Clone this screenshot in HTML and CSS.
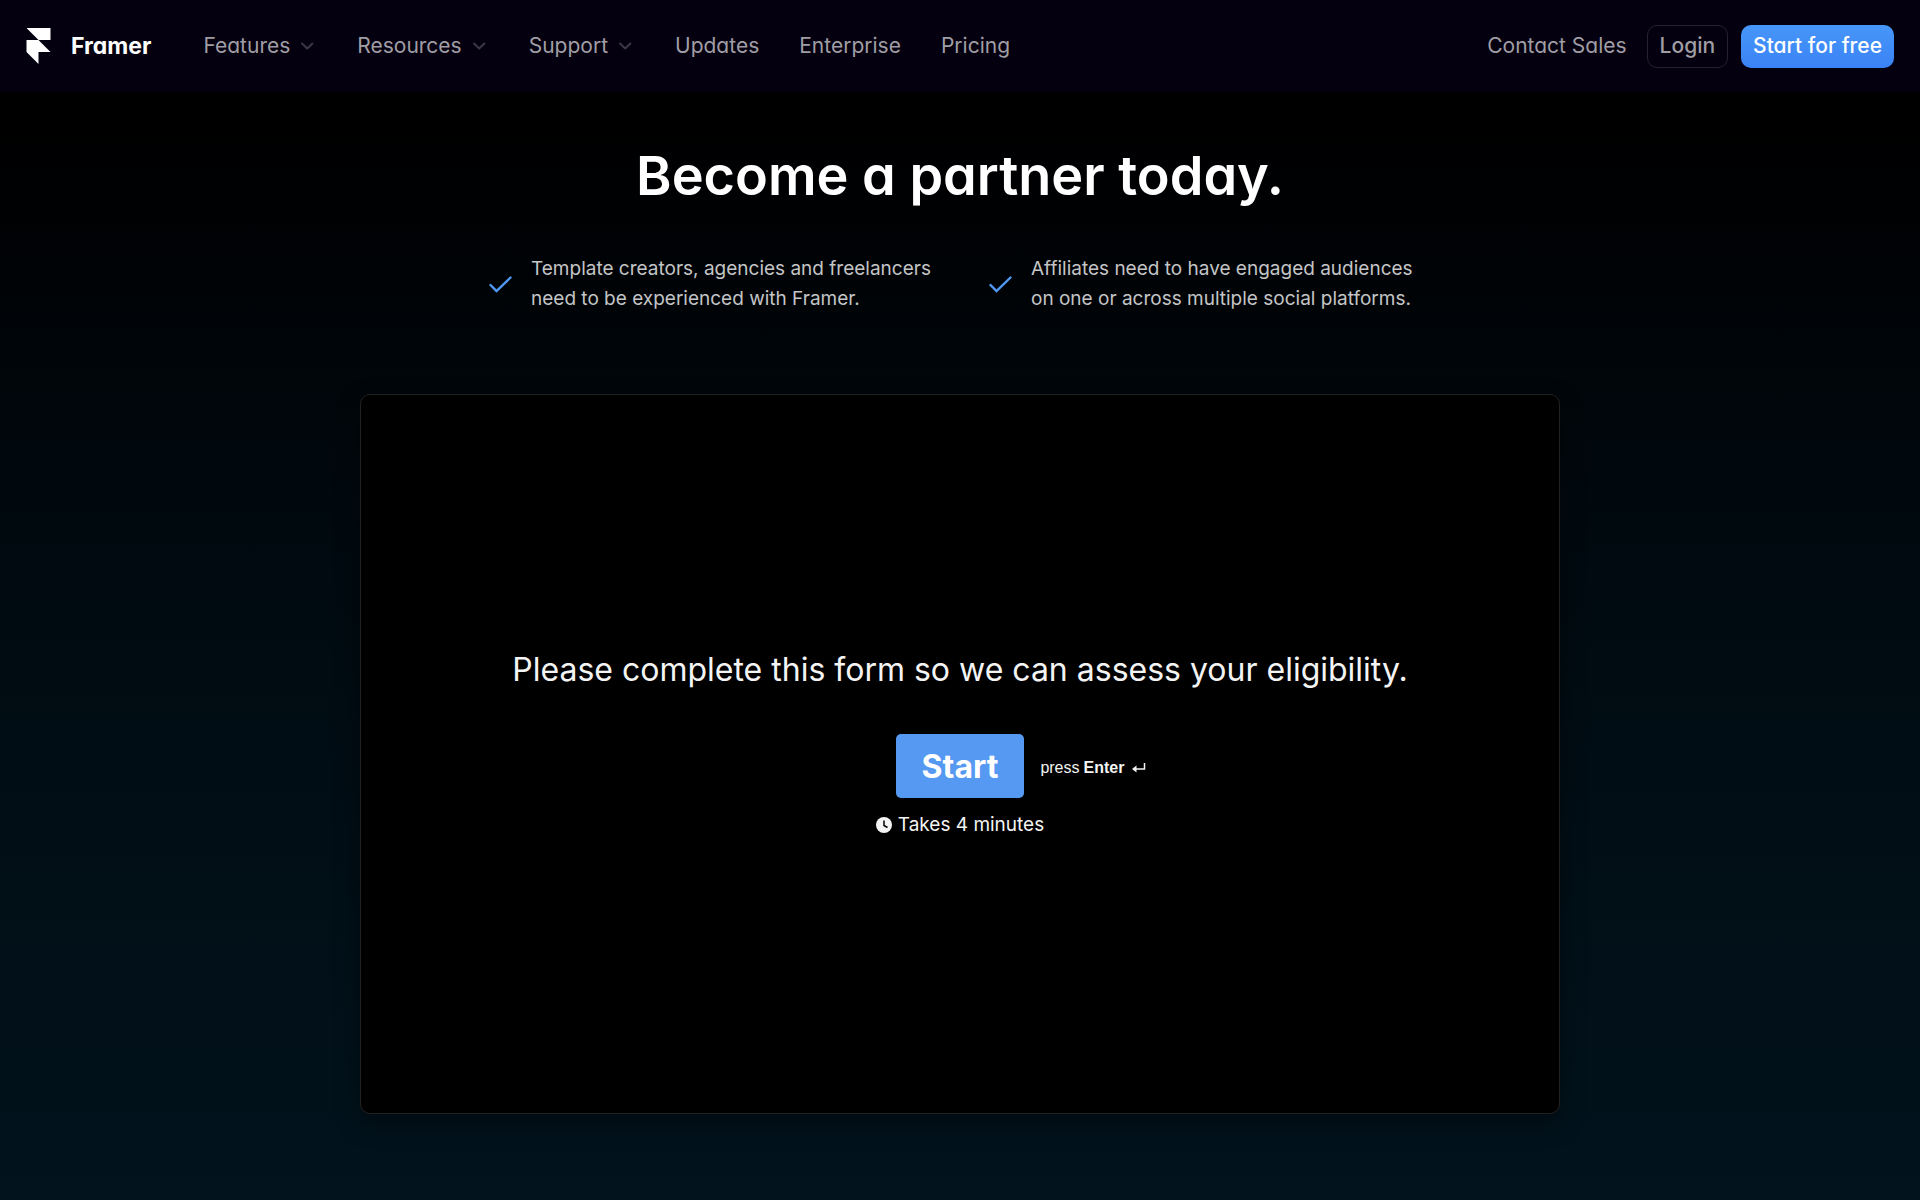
FILE: index.html
```html
<!DOCTYPE html>
<html lang="en">
<head>
<meta charset="utf-8">
<meta name="viewport" content="width=device-width, initial-scale=1">
<title>Framer Partners</title>
<link rel="stylesheet" href="styles.css">
</head>
<body>
<header class="site-header">
  <a class="brand" href="#">
    <svg class="brand-mark" viewBox="0 0 24 36" aria-hidden="true"><path d="M0 0h24v12H12zM0 12h12l12 12H12v12L0 24z"/></svg>
    <span>Framer</span>
  </a>
  <nav class="main-nav" aria-label="Main">
    <a href="#">Features <svg class="chevron" viewBox="0 0 17 8" aria-hidden="true"><path d="M2 1.500l5.200 5 5.200-5"/></svg></a>
    <a href="#">Resources <svg class="chevron" viewBox="0 0 17 8" aria-hidden="true"><path d="M2 1.500l5.200 5 5.200-5"/></svg></a>
    <a href="#">Support <svg class="chevron" viewBox="0 0 17 8" aria-hidden="true"><path d="M2 1.500l5.200 5 5.200-5"/></svg></a>
    <a href="#">Updates</a>
    <a href="#">Enterprise</a>
    <a href="#">Pricing</a>
  </nav>
  <div class="account">
    <a class="contact" href="#">Contact Sales</a>
    <button class="login" type="button">Login</button>
    <button class="signup" type="button">Start for free</button>
  </div>
</header>
<main class="partner">
  <h1>Become a partner today.</h1>
  <ul class="requirements">
    <li>
      <svg class="tick" viewBox="0 0 24 18" aria-hidden="true"><path d="M1.500 10l6 6L21.500 2.500"/></svg>
      <span>Template creators, agencies and freelancers<br>need to be experienced with Framer.</span>
    </li>
    <li>
      <svg class="tick" viewBox="0 0 24 18" aria-hidden="true"><path d="M1.500 10l6 6L21.500 2.500"/></svg>
      <span>Affiliates need to have engaged audiences<br>on one or across multiple social platforms.</span>
    </li>
  </ul>
  <section class="form-card">
    <h2>Please complete this form so we can assess your eligibility.</h2>
    <div class="start-row">
      <button class="start" type="button">Start</button>
      <p class="hint">press <strong>Enter</strong>
        <svg class="enter" viewBox="0 0 14 12" aria-hidden="true"><path class="enter-line" d="M12.500 1v6H2"/><path d="M4.500 3.500v7L0 7z"/></svg>
      </p>
    </div>
    <p class="duration">
      <svg class="clock" viewBox="0 0 16 16" aria-hidden="true"><circle cx="8" cy="8" r="8"/><path d="M8 3.500V8.500l3.500 2"/></svg>
      Takes 4 minutes
    </p>
  </section>
</main>
</body>
</html>
```
FILE: styles.css
```css
* {
  box-sizing: border-box;
}

body {
  margin: 0;
  min-height: 100vh;
  background: linear-gradient(#000 92px, #000103 200px, #000a10 560px, #02131d 1200px);
  color: #fff;
  font-family: Inter, "Liberation Sans", sans-serif;
}

h1, h2, p, ul {
  margin: 0;
  padding: 0;
}

a {
  color: inherit;
  text-decoration: none;
}

button {
  font: inherit;
  cursor: pointer;
}

.site-header {
  display: flex;
  align-items: center;
  height: 92px;
  padding: 0 26px;
  background: #04000f;
  color: #a09ea5;
  font-size: 21px;
  line-height: 28px;
  font-feature-settings: "cv11";
}

.brand {
  display: flex;
  align-items: center;
  gap: 20px;
  color: #fff;
  font-size: 23px;
  font-weight: 700;
}

.brand-mark {
  width: 25px;
  height: 36px;
  fill: #fff;
}

.main-nav {
  display: flex;
  gap: 40px;
  margin-left: 52px;
}

.main-nav a {
  display: flex;
  align-items: center;
  gap: 10px;
}

.chevron {
  width: 17px;
  height: 8px;
  fill: none;
  stroke: #3b3845;
  stroke-width: 2;
  stroke-linecap: round;
  stroke-linejoin: round;
}

.account {
  display: flex;
  align-items: center;
  margin-left: auto;
}

.login,
.signup {
  height: 43px;
  padding: 0 12px;
  border-radius: 10px;
  font-weight: 500;
}

.login {
  margin: 0 13px 0 20px;
  border: 1px solid #25212e;
  background: transparent;
  color: #a09ea5;
}

.signup {
  border: 0;
  background: linear-gradient(#4796f8, #3a83f7);
  color: #fff;
}

.partner {
  display: flex;
  flex-direction: column;
  align-items: center;
  padding: 48px 24px 86px;
}

h1 {
  font-size: 54px;
  font-weight: 600;
  line-height: 72px;
  font-feature-settings: "cv11";
}

.requirements {
  display: grid;
  grid-template-columns: 442px 442px;
  gap: 58px;
  margin-top: 42px;
  list-style: none;
  color: #c4c5c6;
  font-size: 19px;
  line-height: 30px;
}

.requirements li {
  display: flex;
  align-items: center;
  gap: 18px;
  white-space: nowrap;
}

.tick {
  width: 24px;
  height: 18px;
  fill: none;
  stroke: #509af5;
  stroke-width: 2.4;
  stroke-linecap: round;
}

.form-card {
  display: flex;
  flex-direction: column;
  align-items: center;
  justify-content: center;
  width: 100%;
  max-width: 1200px;
  min-height: 720px;
  margin-top: 80px;
  padding-bottom: 22px;
  border: 1px solid #222;
  border-radius: 10px;
  background: #000;
  box-shadow: 0 10px 24px rgba(0, 0, 0, 0.4);
}

h2 {
  font-size: 32px;
  font-weight: 400;
  line-height: 44px;
  color: #f4f4f4;
}

.start-row {
  display: grid;
  grid-template-columns: 1fr auto 1fr;
  align-items: center;
  column-gap: 16px;
  margin-top: 42px;
}

.start {
  grid-column: 2;
  height: 64px;
  padding: 0 26px;
  border: 0;
  border-radius: 5px;
  background: #5599f2;
  color: #fff;
  font-size: 32px;
  font-weight: 700;
}

.hint {
  display: flex;
  align-items: center;
  gap: 4px;
  padding-top: 4px;
  color: #f4f4f4;
  font-family: "Liberation Sans", Arial, sans-serif;
  font-size: 16px;
  white-space: nowrap;
}

.enter {
  width: 14px;
  height: 12px;
  margin-left: 4px;
  fill: #f4f4f4;
}

.enter-line {
  fill: none;
  stroke: #f4f4f4;
  stroke-width: 1.5;
}

.duration {
  display: flex;
  align-items: center;
  gap: 6px;
  margin-top: 14px;
  color: #f4f4f4;
  font-size: 19px;
  line-height: 26px;
}

.clock {
  width: 16px;
  height: 16px;
  fill: #f4f4f4;
}

.clock path {
  fill: none;
  stroke: #000;
  stroke-width: 1.5;
}
```
